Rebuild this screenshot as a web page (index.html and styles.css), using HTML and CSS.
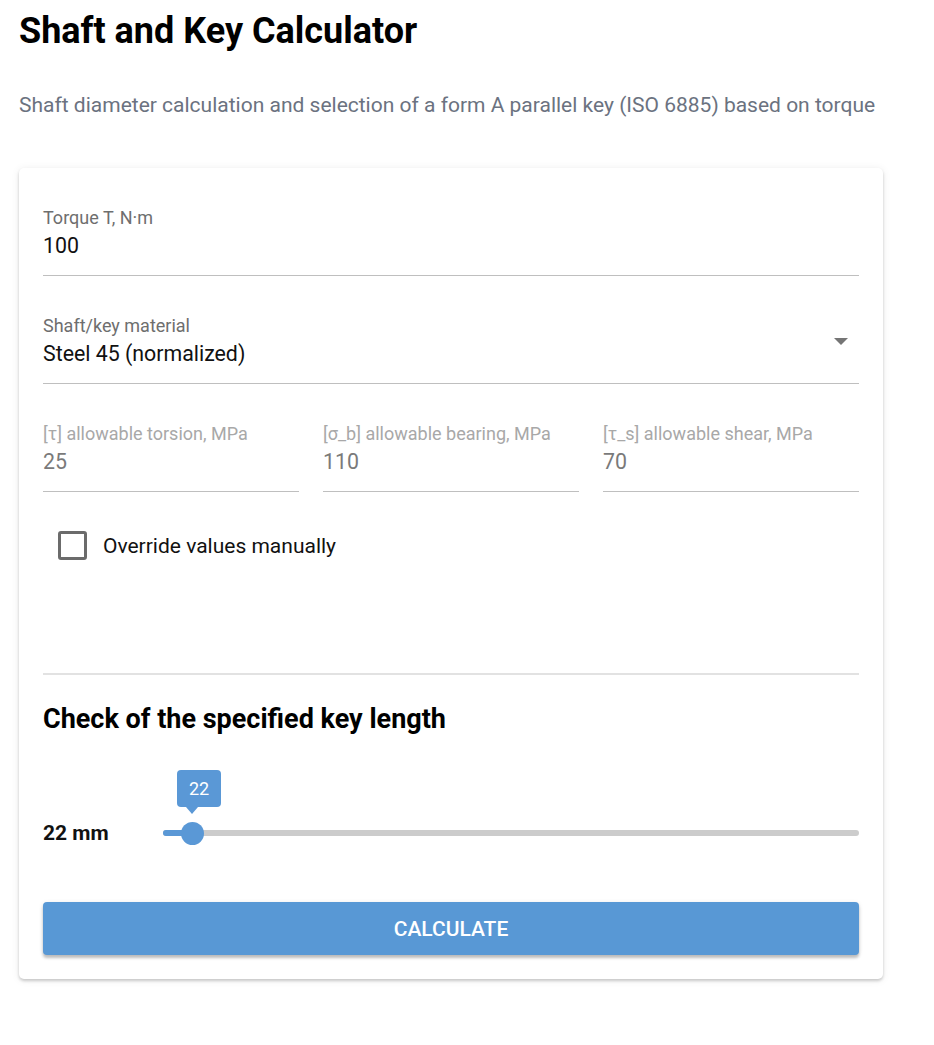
FILE: index.html
```html
<!DOCTYPE html>
<html lang="en">
<head>
<meta charset="utf-8">
<title>Shaft and Key Calculator</title>
<link rel="stylesheet" href="styles.css">
</head>
<body>
<div class="page">
  <h1 class="title">Shaft and Key Calculator</h1>
  <p class="subtitle">Shaft diameter calculation and selection of a form A parallel key (ISO 6885) based on torque</p>

  <div class="card">
    <div class="field">
      <div class="field-label">Torque T, N·m</div>
      <div class="field-value">100</div>
    </div>

    <div class="field field-select">
      <div class="field-label">Shaft/key material</div>
      <div class="field-value">Steel 45 (normalized)</div>
      <span class="select-arrow"></span>
    </div>

    <div class="field-row">
      <div class="field field-disabled">
        <div class="field-label">[τ] allowable torsion, MPa</div>
        <div class="field-value">25</div>
      </div>
      <div class="field field-disabled">
        <div class="field-label">[σ_b] allowable bearing, MPa</div>
        <div class="field-value">110</div>
      </div>
      <div class="field field-disabled">
        <div class="field-label">[τ_s] allowable shear, MPa</div>
        <div class="field-value">70</div>
      </div>
    </div>

    <label class="check-row">
      <span class="check-box"></span>
      <span class="check-label">Override values manually</span>
    </label>

    <hr class="divider">

    <h2 class="section-title">Check of the specified key length</h2>

    <div class="slider-row">
      <div class="slider-value">22 mm</div>
      <div class="slider">
        <div class="slider-track"></div>
        <div class="slider-fill" style="width: 29px"></div>
        <div class="slider-thumb" style="left: 29px">
          <div class="slider-tip">22</div>
        </div>
      </div>
    </div>

    <button class="btn-calc" type="button">Calculate</button>
  </div>
</div>
</body>
</html>
```

FILE: styles.css
```css
* { box-sizing: border-box; }

html, body {
  margin: 0;
  padding: 0;
  background: #ffffff;
  font-family: Roboto, "Liberation Sans", Arial, sans-serif;
  color: #000;
}

.page {
  padding: 9px 19px 40px;
}

.title {
  margin: 0;
  font-size: 36px;
  line-height: 44px;
  font-weight: 700;
  color: #000;
}

.subtitle {
  margin: 38px 0 0;
  font-size: 21px;
  line-height: 28px;
  color: #6b7280;
}

.card {
  margin-top: 49px;
  width: 864px;
  background: #fff;
  border-radius: 5px;
  box-shadow: 0 2px 3px rgba(0, 0, 0, 0.18), 0 1px 8px rgba(0, 0, 0, 0.08);
  padding: 24px 24px 24px;
}

.field {
  position: relative;
  padding-top: 14px;
  padding-bottom: 15px;
  border-bottom: 1px solid #bfbfbf;
  margin-bottom: 24px;
}

.field-label {
  font-size: 18px;
  line-height: 24px;
  color: #6e6e6e;
}

.field-value {
  margin-top: 2px;
  font-size: 21.33px;
  line-height: 28px;
  color: #111;
}

.select-arrow {
  position: absolute;
  right: 11px;
  top: 38px;
  width: 0;
  height: 0;
  border-left: 7.5px solid transparent;
  border-right: 7.5px solid transparent;
  border-top: 7.5px solid #757575;
}

.field-row {
  display: grid;
  grid-template-columns: repeat(3, 1fr);
  column-gap: 24px;
}

.field-row .field {
  margin-bottom: 0;
}

.field-disabled .field-label {
  color: #a8a8a8;
}

.field-disabled .field-value {
  color: #7a7a7a;
}

.check-row {
  display: flex;
  align-items: center;
  gap: 16px;
  margin: 39px 0 0 15px;
  height: 29px;
}

.check-box {
  width: 29px;
  height: 29px;
  border: 3px solid #6b6b6b;
  border-radius: 3px;
}

.check-label {
  font-size: 21px;
  line-height: 28px;
  color: #111;
}

.divider {
  margin: 113px 0 0;
  border: 0;
  border-top: 2px solid #e2e2e2;
  height: 0;
}

.section-title {
  margin: 26px 0 0;
  font-size: 27px;
  line-height: 36px;
  font-weight: 700;
  color: #000;
}

.slider-row {
  display: flex;
  align-items: center;
  height: 24px;
  margin-top: 84px;
}

.slider-value {
  width: 120px;
  font-size: 21px;
  font-weight: 700;
  color: #111;
}

.slider {
  position: relative;
  flex: 1;
  height: 24px;
}

.slider-track {
  position: absolute;
  left: 0;
  right: 0;
  top: 9px;
  height: 6px;
  border-radius: 3px;
  background: #cccccc;
}

.slider-fill {
  position: absolute;
  left: 0;
  top: 9px;
  height: 6px;
  border-radius: 3px;
  background: #5a98d6;
}

.slider-thumb {
  position: absolute;
  top: 0.5px;
  width: 23px;
  height: 23px;
  margin-left: -11.5px;
  border-radius: 50%;
  background: #5a98d6;
}

.slider-tip {
  position: absolute;
  left: -3.5px;
  bottom: 37.5px;
  width: 44px;
  height: 37px;
  border-radius: 4px;
  background: #5a98d6;
  color: #fff;
  font-size: 18px;
  line-height: 37px;
  text-align: center;
}

.slider-tip::after {
  content: "";
  position: absolute;
  left: 9px;
  top: 100%;
  border-left: 6px solid transparent;
  border-right: 6px solid transparent;
  border-top: 7px solid #5a98d6;
}

.btn-calc {
  display: block;
  width: 100%;
  height: 53px;
  margin-top: 57px;
  border: 0;
  border-radius: 4px;
  background: #5898d5;
  color: #fff;
  font-family: Roboto, "Liberation Sans", Arial, sans-serif;
  font-size: 21px;
  font-weight: 500;
  text-transform: uppercase;
  box-shadow: 0 3px 3px rgba(0, 0, 0, 0.22), 0 1px 5px rgba(0, 0, 0, 0.1);
}
```
